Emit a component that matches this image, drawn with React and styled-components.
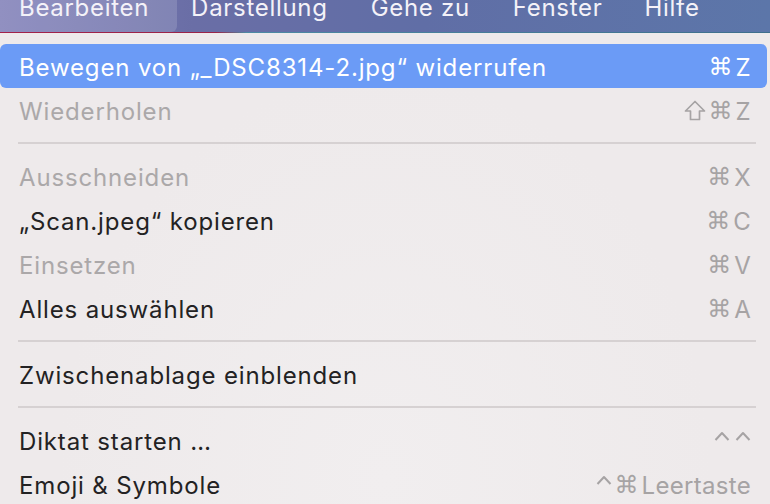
import React from "react";
import styled, { createGlobalStyle } from "styled-components";

const Global = createGlobalStyle`
  html, body { margin: 0; padding: 0; background: #eeeaeb; }
  body { font-family: Inter, "Noto Sans", "DejaVu Sans", sans-serif; -webkit-font-smoothing: antialiased; }
`;

const Page = styled.div`
  width: 770px;
  height: 504px;
  overflow: hidden;
  background: radial-gradient(ellipse at 50% 95%, #f1eeef 0%, #eeeaeb 60%);
`;

const MenuBar = styled.div`
  height: 32px;
  display: flex;
  align-items: flex-start;
  background: linear-gradient(90deg, #7e7db7 0%, #6a6ea6 25%, #606ea6 55%, #5c76a9 100%);
  overflow: hidden;
`;

const Accent = styled.div`
  height: 1px;
  background: linear-gradient(90deg, #a3214a 0%, #9a2448 28%, #4d8aa4 32%, #3f6f8c 100%);
`;

const Title = styled.div`
  flex: none;
  font-size: 24px;
  letter-spacing: 0.7px;
  line-height: 22px;
  margin-top: -3px;
  color: #f4f2f8;
  padding: 0 ${(p) => p.$pr}px 0 ${(p) => p.$pl}px;
  height: 35px;
  box-sizing: border-box;
  ${(p) =>
    p.$active &&
    `background: rgba(255,255,255,0.15); border-bottom-right-radius: 6px;`}
`;

const Menu = styled.div`
  padding: 11px 3px 0 0;
`;

const Row = styled.div`
  height: 44px;
  display: flex;
  align-items: center;
  justify-content: space-between;
  padding: 2px 16px 0 19px;
  box-sizing: border-box;
  font-size: 24px;
  letter-spacing: 0.85px;
  border-radius: 6px;
  white-space: nowrap;
  color: ${(p) => (p.$active ? "#ffffff" : p.$disabled ? "#aba8a9" : "#232223")};
  background: ${(p) => (p.$active ? "#6b9bf6" : "transparent")};
`;

const Shortcut = styled.span`
  display: flex;
  align-items: center;
  gap: 3px;
  letter-spacing: 0.3px;
  color: ${(p) => (p.$active ? "#ffffff" : "#a6a3a4")};
`;

const Sym = styled.span`
  font-family: "DejaVu Sans", sans-serif;
  font-size: 24px;
  letter-spacing: 0;
`;

const Glyph = styled.svg`
  display: block;
  flex: none;
  margin-top: ${(p) => p.$mt || 0}px;
`;

const Sep = styled.div`
  height: 22px;
  display: flex;
  align-items: center;
  padding: 0 11px 0 18px;
  &::after {
    content: "";
    flex: 1;
    height: 2px;
    background: #d6d1d2;
  }
`;

const titles = [
  ["Bearbeiten", 19, 28, true],
  ["Darstellung", 14, 43],
  ["Gehe zu", 0, 43],
  ["Fenster", 0, 42],
  ["Hilfe", 0, 0],
];

const Shift = () => (
  <Glyph width="22" height="21" viewBox="0 0 22 21" $mt={-2}>
    <path
      d="M11 1.5 L20.5 11 H15.5 V19.5 H6.5 V11 H1.5 Z"
      fill="none"
      stroke="currentColor"
      strokeWidth="1.7"
      strokeLinejoin="round"
    />
  </Glyph>
);

const Caret = () => (
  <Glyph width="16" height="10" viewBox="0 0 16 10" $mt={-10}>
    <path
      d="M1.5 9 L8 2 L14.5 9"
      fill="none"
      stroke="currentColor"
      strokeWidth="2"
      strokeLinejoin="round"
    />
  </Glyph>
);

function Keys({ keys, active, gap }) {
  return (
    <Shortcut $active={active} style={gap != null ? { gap } : undefined}>
      {keys.map((k, i) => {
        if (k === "⇧") return <Shift key={i} />;
        if (k === "⌃") return <Caret key={i} />;
        if (k === "⌘") return <Sym key={i}>{k}</Sym>;
        return <span key={i}>{k}</span>;
      })}
    </Shortcut>
  );
}

export default function App() {
  return (
    <Page>
      <Global />
      <MenuBar>
        {titles.map(([t, pl, pr, a]) => (
          <Title key={t} $pl={pl} $pr={pr} $active={a}>
            {t}
          </Title>
        ))}
      </MenuBar>
      <Accent />
      <Menu>
        <Row $active>
          <span>Bewegen von „_DSC8314-2.jpg“ widerrufen</span>
          <Keys active keys={["⌘", "Z"]} />
        </Row>
        <Row $disabled>
          <span>Wiederholen</span>
          <Keys keys={["⇧", "⌘", "Z"]} />
        </Row>
        <Sep />
        <Row $disabled>
          <span>Ausschneiden</span>
          <Keys keys={["⌘", "X"]} />
        </Row>
        <Row>
          <span>„Scan.jpeg“ kopieren</span>
          <Keys keys={["⌘", "C"]} />
        </Row>
        <Row $disabled>
          <span>Einsetzen</span>
          <Keys keys={["⌘", "V"]} />
        </Row>
        <Row>
          <span>Alles auswählen</span>
          <Keys keys={["⌘", "A"]} />
        </Row>
        <Sep />
        <Row>
          <span>Zwischenablage einblenden</span>
        </Row>
        <Sep />
        <Row>
          <span>Diktat starten …</span>
          <Keys keys={["⌃", "⌃"]} gap={5} />
        </Row>
        <Row>
          <span>Emoji &amp; Symbole</span>
          <Keys keys={["⌃", "⌘", "Leertaste"]} />
        </Row>
      </Menu>
    </Page>
  );
}
